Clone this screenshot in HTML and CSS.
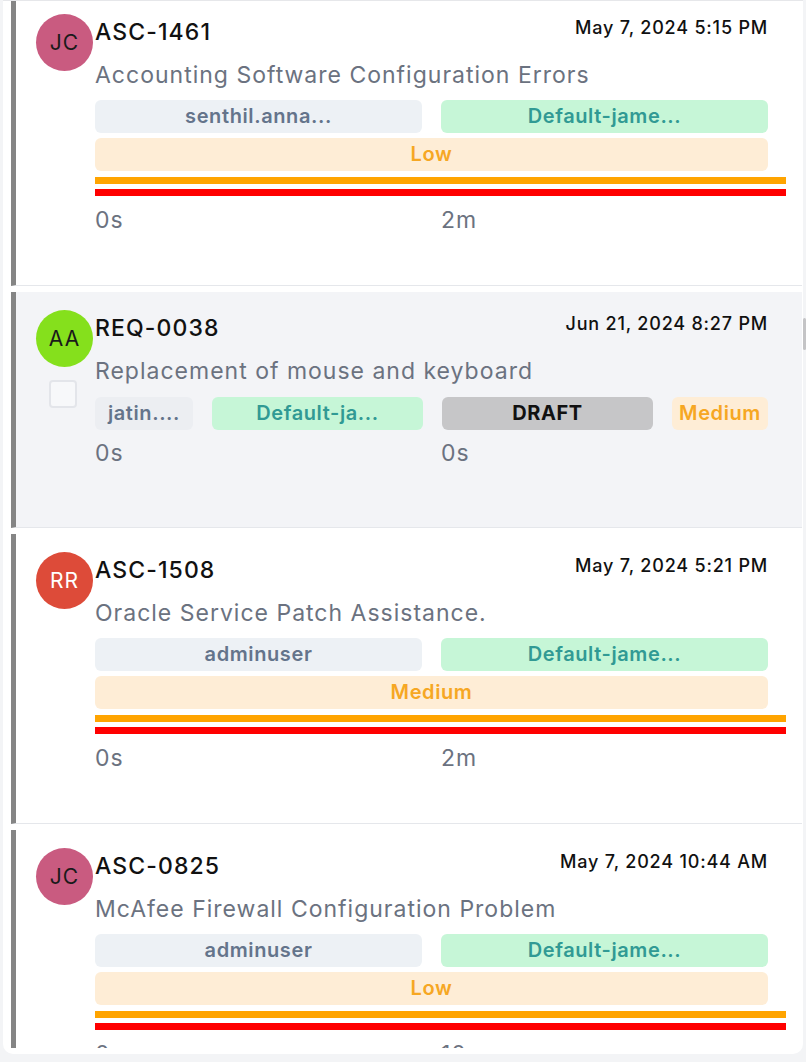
FILE: index.html
```html
<!DOCTYPE html>
<html lang="en">
<head>
    <meta charset="UTF-8">
    <meta name="viewport" content="width=device-width, initial-scale=1.0">
    <title>Tickets</title>
    <link rel="stylesheet" href="styles.css">
</head>
<body>
    <div class="panel">
        <div class="list">
            <div class="list-inner">
                <div class="ticket">
                    <div class="side">
                        <div class="avatar jc">JC</div>
                    </div>
                    <div class="body">
                        <div class="head">
                            <span class="code">ASC-1461</span>
                            <span class="date">May 7, 2024 5:15 PM</span>
                        </div>
                        <p class="subject">Accounting Software Configuration Errors</p>
                        <div class="tags">
                            <span class="tag user">senthil.anna...</span>
                            <span class="tag group">Default-jame...</span>
                            <span class="tag prio wide">Low</span>
                        </div>
                        <div class="bars">
                            <div class="bar orange"></div>
                            <div class="bar red"></div>
                        </div>
                        <div class="times">
                            <span>0s</span>
                            <span>2m</span>
                        </div>
                    </div>
                </div>

                <div class="ticket draft">
                    <div class="side">
                        <div class="avatar aa">AA</div>
                        <div class="check"></div>
                    </div>
                    <div class="body">
                        <div class="head">
                            <span class="code">REQ-0038</span>
                            <span class="date">Jun 21, 2024 8:27 PM</span>
                        </div>
                        <p class="subject">Replacement of mouse and keyboard</p>
                        <div class="tags four">
                            <span class="tag user">jatin....</span>
                            <span class="tag group">Default-ja...</span>
                            <span class="tag status">DRAFT</span>
                            <span class="tag prio">Medium</span>
                        </div>
                        <div class="times">
                            <span>0s</span>
                            <span>0s</span>
                        </div>
                    </div>
                </div>

                <div class="ticket">
                    <div class="side">
                        <div class="avatar rr">RR</div>
                    </div>
                    <div class="body">
                        <div class="head">
                            <span class="code">ASC-1508</span>
                            <span class="date">May 7, 2024 5:21 PM</span>
                        </div>
                        <p class="subject">Oracle Service Patch Assistance.</p>
                        <div class="tags">
                            <span class="tag user">adminuser</span>
                            <span class="tag group">Default-jame...</span>
                            <span class="tag prio wide">Medium</span>
                        </div>
                        <div class="bars">
                            <div class="bar orange"></div>
                            <div class="bar red"></div>
                        </div>
                        <div class="times">
                            <span>0s</span>
                            <span>2m</span>
                        </div>
                    </div>
                </div>

                <div class="ticket">
                    <div class="side">
                        <div class="avatar jc">JC</div>
                    </div>
                    <div class="body">
                        <div class="head">
                            <span class="code">ASC-0825</span>
                            <span class="date">May 7, 2024 10:44 AM</span>
                        </div>
                        <p class="subject">McAfee Firewall Configuration Problem</p>
                        <div class="tags">
                            <span class="tag user">adminuser</span>
                            <span class="tag group">Default-jame...</span>
                            <span class="tag prio wide">Low</span>
                        </div>
                        <div class="bars">
                            <div class="bar orange"></div>
                            <div class="bar red"></div>
                        </div>
                        <div class="times">
                            <span>0s</span>
                            <span>10m</span>
                        </div>
                    </div>
                </div>
            </div>
        </div>
    </div>
    <div class="scroll-thumb"></div>
</body>
</html>
```

FILE: styles.css
```css
* {
    margin: 0;
    padding: 0;
    box-sizing: border-box;
}
body {
    background: #f3f4f6;
    font-family: Inter, "Noto Sans", sans-serif;
    color: #111;
    position: relative;
    min-height: 1062px;
}
.panel {
    margin: 0 3px;
    height: 1054px;
    padding: 0 0 6px 8px;
    background: #fff;
    border-top: 1px solid #e6e7ea;
    border-radius: 0 0 10px 10px;
    display: flex;
    flex-direction: column;
}
.list {
    flex: 1;
    overflow: hidden;
}
.list-inner {
    margin-top: -5px;
}
.ticket {
    display: flex;
    gap: 2px;
    height: 290px;
    margin: 0 1px 6px 0;
    padding: 18px 16px 0 20px;
    border-left: 5px solid #858585;
    border-bottom: 1px solid #e5e7eb;
}
.ticket.draft {
    height: 236px;
    background: #f3f4f7;
}
.side {
    width: 57px;
    flex-shrink: 0;
    display: flex;
    flex-direction: column;
    align-items: center;
    gap: 13px;
}
.avatar {
    width: 57px;
    height: 57px;
    border-radius: 50%;
    display: flex;
    align-items: center;
    justify-content: center;
    font-size: 21px;
    letter-spacing: 1px;
    color: #1a1a1a;
}
.avatar.jc {
    background: #c95b80;
}
.avatar.aa {
    background: #85e01c;
}
.avatar.rr {
    background: #dd4b39;
    color: #fff;
}
.check {
    width: 28px;
    height: 28px;
    margin-left: -4px;
    border: 2px solid #e3e5ea;
    border-radius: 4px;
    background: #f7f8fa;
}
.body {
    flex: 1;
    min-width: 0;
}
.head {
    display: flex;
    justify-content: space-between;
    align-items: flex-start;
    margin-right: 18px;
}
.code {
    font-size: 23px;
    font-weight: 500;
    line-height: 28px;
    letter-spacing: 1.1px;
    margin-top: 4px;
}
.date {
    font-size: 18px;
    font-weight: 500;
    line-height: 22px;
    letter-spacing: 0.8px;
    margin-top: 3px;
}
.subject {
    margin-top: 15px;
    font-size: 23px;
    line-height: 28px;
    letter-spacing: 1px;
    color: #6b7280;
    white-space: nowrap;
}
.tags {
    display: grid;
    grid-template-columns: 1fr 1fr;
    gap: 5px 19px;
    margin: 11px 18px 0 0;
}
.tags.four {
    grid-template-columns: 98px 1fr 1fr 96px;
    margin-top: 12px;
}
.tag {
    height: 33px;
    line-height: 33px;
    border-radius: 6px;
    text-align: center;
    font-size: 20px;
    font-weight: 600;
    letter-spacing: 0.6px;
    white-space: nowrap;
    overflow: hidden;
}
.tag.wide {
    grid-column: 1 / -1;
}
.user {
    background: #edf1f5;
    color: #64748b;
}
.draft .user {
    background: #eceef2;
}
.group {
    background: #c6f6d7;
    color: #319a94;
}
.prio {
    background: #feedd6;
    color: #f6a723;
}
.status {
    background: #c6c6c8;
    color: #111;
    font-weight: 700;
}
.bars {
    margin-top: 6px;
    display: flex;
    flex-direction: column;
    gap: 5px;
}
.bar {
    height: 7px;
}
.bar.orange {
    background: #ffa400;
}
.bar.red {
    background: #ff0000;
}
.times {
    display: grid;
    grid-template-columns: 1fr 1fr;
    gap: 19px;
    margin: 10px 18px 0 0;
    font-size: 23px;
    line-height: 28px;
    letter-spacing: 1px;
    color: #6b7280;
}
.draft .times {
    margin-top: 9px;
}
.scroll-thumb {
    position: absolute;
    top: 318px;
    right: 0;
    width: 3px;
    height: 32px;
    border-radius: 2px;
    background: #c4c4c6;
}
```
